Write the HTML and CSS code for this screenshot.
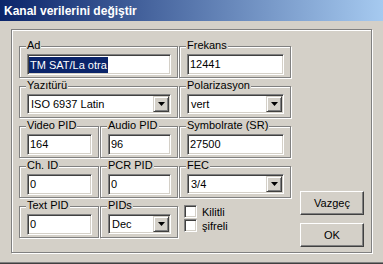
FILE: index.html
```html
<!DOCTYPE html>
<html lang="tr">
<head>
    <meta charset="UTF-8">
    <title>Kanal verilerini değiştir</title>
    <link rel="stylesheet" href="styles.css">
</head>
<body>
    <div class="window">
        <div class="titlebar">Kanal verilerini değiştir</div>
        <div class="panel">
            <div class="fields">
                <div class="group wide">
                    <span class="group-label">Ad</span>
                    <div class="field"><span class="selected">TM SAT/La otra</span></div>
                </div>
                <div class="group">
                    <span class="group-label">Frekans</span>
                    <div class="field">12441</div>
                </div>

                <div class="group wide">
                    <span class="group-label">Yazıtürü</span>
                    <div class="combo">
                        <span class="combo-value">ISO 6937 Latin</span>
                        <span class="combo-button"><svg width="7" height="4" viewBox="0 0 7 4"><polygon points="0,0 7,0 3.5,4" fill="#000"/></svg></span>
                    </div>
                </div>
                <div class="group">
                    <span class="group-label">Polarizasyon</span>
                    <div class="combo">
                        <span class="combo-value">vert</span>
                        <span class="combo-button"><svg width="7" height="4" viewBox="0 0 7 4"><polygon points="0,0 7,0 3.5,4" fill="#000"/></svg></span>
                    </div>
                </div>

                <div class="group">
                    <span class="group-label">Video PID</span>
                    <div class="field">164</div>
                </div>
                <div class="group">
                    <span class="group-label">Audio PID</span>
                    <div class="field">96</div>
                </div>
                <div class="group">
                    <span class="group-label">Symbolrate (SR)</span>
                    <div class="field">27500</div>
                </div>

                <div class="group">
                    <span class="group-label">Ch. ID</span>
                    <div class="field">0</div>
                </div>
                <div class="group">
                    <span class="group-label">PCR PID</span>
                    <div class="field">0</div>
                </div>
                <div class="group">
                    <span class="group-label">FEC</span>
                    <div class="combo">
                        <span class="combo-value">3/4</span>
                        <span class="combo-button"><svg width="7" height="4" viewBox="0 0 7 4"><polygon points="0,0 7,0 3.5,4" fill="#000"/></svg></span>
                    </div>
                </div>

                <div class="group">
                    <span class="group-label">Text PID</span>
                    <div class="field">0</div>
                </div>
                <div class="group">
                    <span class="group-label">PIDs</span>
                    <div class="combo">
                        <span class="combo-value">Dec</span>
                        <span class="combo-button"><svg width="7" height="4" viewBox="0 0 7 4"><polygon points="0,0 7,0 3.5,4" fill="#000"/></svg></span>
                    </div>
                </div>
                <div class="checks">
                    <div class="check"><span class="check-box"></span>Kilitli</div>
                    <div class="check"><span class="check-box"></span>şifreli</div>
                </div>
            </div>
            <div class="buttons">
                <div class="button">Vazgeç</div>
                <div class="button">OK</div>
            </div>
        </div>
    </div>
</body>
</html>
```

FILE: styles.css
```css
body {
    margin: 0;
    background: #D4D0C8;
    font-family: 'Liberation Sans', Arial, sans-serif;
    font-size: 11px;
    color: #000;
}
.window {
    width: 383px;
    height: 264px;
    box-sizing: border-box;
    border-bottom: 1px solid #404040;
    box-shadow: inset 0 -1px 0 #808080;
    overflow: hidden;
}
.titlebar {
    height: 21px;
    box-sizing: border-box;
    padding: 2px 0 0 4px;
    line-height: 19px;
    font-size: 12px;
    font-weight: bold;
    color: #fff;
    background: linear-gradient(to right, #0A246A, #A6CAF0);
}
.panel {
    display: flex;
    width: 361px;
    height: 224px;
    box-sizing: border-box;
    margin: 8px 0 0 11px;
    padding: 16px 7px 5px 7px;
    border: 1px solid #808080;
    box-shadow: inset 1px 1px 0 #fff, 1px 1px 0 #fff;
}
.fields {
    display: grid;
    grid-template-columns: 80px 78px 112px;
    grid-auto-rows: 32px;
    column-gap: 1px;
    row-gap: 8px;
}
.group {
    box-sizing: border-box;
    padding: 0 6px 0 7px;
    border: 1px solid #808080;
    box-shadow: inset 1px 1px 0 #fff, 1px 1px 0 #fff;
}
.wide {
    grid-column: span 2;
}
.group-label {
    display: block;
    width: fit-content;
    height: 13px;
    margin: -8px 0 0 -1px;
    padding: 0 1px;
    line-height: 13px;
    background: #D4D0C8;
    white-space: nowrap;
}
.field, .combo {
    box-sizing: border-box;
    margin-top: 2px;
    border: 1px solid;
    border-color: #808080 #fff #fff #808080;
    box-shadow: inset 1px 1px 0 #404040, inset -1px -1px 0 #D4D0C8;
    background: #fff;
}
.field {
    height: 21px;
    padding: 0 2px;
    line-height: 19px;
    white-space: nowrap;
}
.selected {
    display: inline-block;
    height: 16px;
    margin-left: -1px;
    padding: 0 1px;
    line-height: 16px;
    vertical-align: middle;
    background: #0A246A;
    color: #fff;
}
.combo {
    display: flex;
    align-items: center;
    height: 20px;
}
.combo-value {
    flex: 1;
    padding-left: 3px;
}
.combo-button {
    display: flex;
    align-items: center;
    justify-content: center;
    width: 16px;
    height: 16px;
    box-sizing: border-box;
    margin-right: 1px;
    border: 1px solid;
    border-color: #D4D0C8 #404040 #404040 #D4D0C8;
    box-shadow: inset 1px 1px 0 #fff, inset -1px -1px 0 #808080;
    background: #D4D0C8;
}
.checks {
    display: flex;
    flex-direction: column;
    gap: 1px;
    margin-top: -1px;
    padding-left: 5px;
}
.check {
    display: flex;
    align-items: center;
    gap: 5px;
    height: 13px;
}
.check-box {
    width: 13px;
    height: 13px;
    box-sizing: border-box;
    border: 1px solid;
    border-color: #808080 #fff #fff #808080;
    box-shadow: inset 1px 1px 0 #404040, inset -1px -1px 0 #D4D0C8;
    background: #fff;
}
.buttons {
    display: flex;
    flex-direction: column;
    gap: 8px;
    align-self: flex-end;
    margin-left: 9px;
}
.button {
    width: 64px;
    height: 24px;
    box-sizing: border-box;
    border: 1px solid;
    border-color: #fff #404040 #404040 #fff;
    box-shadow: inset -1px -1px 0 #808080;
    text-align: center;
    line-height: 22px;
}
```
